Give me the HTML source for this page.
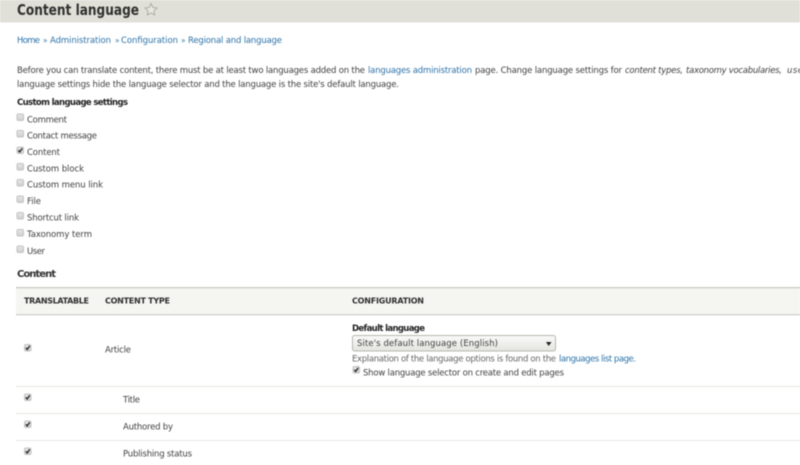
<!DOCTYPE html>
<html><head><meta charset="utf-8"><style>
html,body{margin:0;padding:0;background:#fff;width:800px;height:465px;overflow:hidden}
svg{display:block;filter:blur(.45px)}
text{font-family:"DejaVu Sans",sans-serif;font-size:8.5px;fill:#404040;white-space:pre}
.a{fill:#2c72a8}
.b{font-weight:bold;fill:#222;font-size:8.5px}
.h{font-weight:bold;fill:#2e2e2e;font-size:8px}
.i{font-style:italic}
.r{font-size:7.5px}
</style></head><body>
<svg width="800" height="465" viewBox="0 0 800 465" xmlns="http://www.w3.org/2000/svg">
<defs>
<linearGradient id="g" x1="0" y1="0" x2="0" y2="1"><stop offset="0" stop-color="#e8e8e8"/><stop offset="1" stop-color="#cfcfcf"/></linearGradient>
<linearGradient id="s" x1="0" y1="0" x2="0" y2="1"><stop offset="0" stop-color="#fafaf8"/><stop offset="1" stop-color="#e4e4df"/></linearGradient>
<g id="cb"><rect x=".5" y=".5" width="6.5" height="6.5" rx="1.5" fill="url(#g)" stroke="#c2c2c2" stroke-width="1"/></g>
<g id="cc"><use href="#cb"/><path d="M1.8 3.8L3.2 5.4L5.8 1.8" fill="none" stroke="#222" stroke-width="1.3"/></g>
</defs>
<rect x="0" y="0" width="800" height="22.5" fill="#e0e0d8"/>
<text x="17" y="15" textLength="122" lengthAdjust="spacingAndGlyphs" style="font-size:15px;font-weight:bold;fill:#2f2f2f">Content language</text>
<path d="M151 3.5L152.8 7.4L157 7.9L153.9 10.8L154.7 15L151 12.9L147.3 15L148.1 10.8L145 7.9L149.2 7.4Z" fill="#e8e8e0" stroke="#a8a89c" stroke-width=".9"/>

<text class="a" x="17" y="43" textLength="23">Home</text>
<text class="a r" x="43" y="43">»</text>
<text class="a" x="50" y="43" textLength="61">Administration</text>
<text class="a r" x="115" y="43">»</text>
<text class="a" x="121" y="43" textLength="57">Configuration</text>
<text class="a r" x="181" y="43">»</text>
<text class="a" x="188" y="43" textLength="94">Regional and language</text>

<text x="17" y="73" textLength="348">Before you can translate content, there must be at least two languages added on the</text>
<text class="a" x="368" y="73" textLength="104">languages administration</text>
<text x="475" y="73" textLength="147">page. Change language settings for</text>
<text class="i" x="625" y="73" textLength="58">content types,</text>
<text class="i" x="686" y="73" textLength="96">taxonomy vocabularies,</text>
<text class="i" x="787" y="73" textLength="16">use</text>
<text x="17" y="87" textLength="382">language settings hide the language selector and the language is the site's default language.</text>
<text class="b" x="17" y="105" textLength="111">Custom language settings</text>

<use href="#cb" x="16.5" y="113.5"/><text x="27" y="122.5" textLength="40">Comment</text>
<use href="#cb" x="16.5" y="130"/><text x="27" y="138.5" textLength="70">Contact message</text>
<use href="#cc" x="16.5" y="146.5"/><text x="27" y="155" textLength="33">Content</text>
<use href="#cb" x="16.5" y="163"/><text x="27" y="171.5" textLength="57">Custom block</text>
<use href="#cb" x="16.5" y="179"/><text x="27" y="187.5" textLength="76">Custom menu link</text>
<use href="#cb" x="16.5" y="195.5"/><text x="27" y="204" textLength="14">File</text>
<use href="#cb" x="16.5" y="212"/><text x="27" y="220.5" textLength="52">Shortcut link</text>
<use href="#cb" x="16.5" y="229"/><text x="27" y="237" textLength="65">Taxonomy term</text>
<use href="#cb" x="16.5" y="245.5"/><text x="27" y="254" textLength="18">User</text>

<text x="17" y="277" textLength="39" style="font-size:10px;font-weight:bold;fill:#333">Content</text>

<rect x="16" y="287" width="784" height="28" fill="#f5f5f2"/>
<rect x="16" y="287" width="784" height="1.3" fill="#c8c8c4"/>
<rect x="16" y="314" width="784" height="1.3" fill="#d0d0cc"/>
<text class="h" x="24" y="303.5" textLength="65">TRANSLATABLE</text>
<text class="h" x="105" y="303.5" textLength="65">CONTENT TYPE</text>
<text class="h" x="352" y="303.5" textLength="72">CONFIGURATION</text>

<use href="#cc" x="24" y="344"/>
<text x="105" y="352.5" textLength="26">Article</text>
<text class="b" x="352" y="331" textLength="73">Default language</text>
<rect x="352.5" y="335.5" width="203" height="15.5" rx="2" fill="url(#s)" stroke="#b8b8b0"/>
<text x="357" y="346" textLength="141">Site's default language (English)</text>
<path d="M546 342L551.5 342L548.7 346Z" fill="#222"/>
<text x="352" y="361.5" textLength="204" style="fill:#666">Explanation of the language options is found on the</text>
<text class="a" x="559" y="361.5" textLength="77">languages list page.</text>
<use href="#cc" x="352.5" y="366"/>
<text x="363" y="375.5" textLength="201">Show language selector on create and edit pages</text>

<rect x="16" y="386" width="784" height="1" fill="#e6e6e2"/>
<use href="#cc" x="24" y="393.5"/>
<text x="123" y="402.5" textLength="17">Title</text>
<rect x="16" y="413" width="784" height="1" fill="#e6e6e2"/>
<use href="#cc" x="24" y="420.5"/>
<text x="123" y="429.5" textLength="50">Authored by</text>
<rect x="16" y="440" width="784" height="1" fill="#e6e6e2"/>
<use href="#cc" x="24" y="447.5"/>
<text x="123" y="456.5" textLength="69">Publishing status</text>
</svg>
</body></html>
